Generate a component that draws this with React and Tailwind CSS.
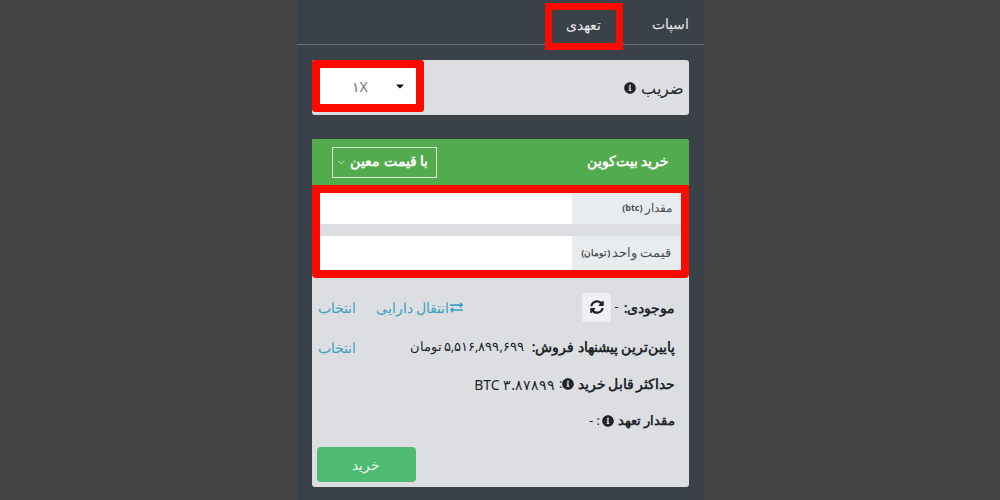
import { FaCaretDown, FaInfoCircle, FaSyncAlt, FaExchangeAlt } from 'react-icons/fa';
import { FiChevronDown } from 'react-icons/fi';

const Info = () => <FaInfoCircle className="text-[12px] text-[#212529] shrink-0" />;

const App = () => {
    return (
        <div dir="rtl" className="w-[1000px] h-[500px] overflow-hidden bg-[#454545] flex justify-center font-['Noto_Sans','Liberation_Sans',sans-serif]">
            <div className="w-[407px] h-full bg-[#3b4148] flex flex-col">
                {/* tabs */}
                <div className="h-[45px] shrink-0 border-b border-[#6b7076] flex items-start pt-[3px] text-[14px] text-[#e9ecef] pr-[15px]">
                    <span className="h-[42px] pb-[2px] flex items-center">اسپات</span>
                    <span className="mr-[29px] w-[78px] h-[47px] pb-[5px] border-[7px] border-[#fb0a00] flex items-center justify-center">تعهدی</span>
                </div>

                <div className="px-[15px] flex flex-col">
                    {/* leverage */}
                    <div className="mt-[15px] h-[55px] rounded-[3px] bg-[#dcdee1] flex items-start justify-between">
                        <div className="h-[55px] flex items-center gap-[5px] pr-[5px] text-[16px] text-[#212529]">
                            <span>ضریب</span>
                            <Info />
                        </div>
                        <div className="w-[112px] h-[52px] rounded-[3px] border-[8px] border-[#fb0a00] bg-white flex items-center justify-between pr-[10px] pl-[32px] text-[14px] text-[#6c757d]">
                            <FaCaretDown className="text-[12px] text-[#111]" />
                            <span>۱X</span>
                        </div>
                    </div>

                    {/* buy card */}
                    <div className="mt-[24px] h-[348px] rounded-[3px] bg-[#dcdee1] flex flex-col overflow-hidden">
                        <div className="h-[46px] shrink-0 bg-[#52ab4d] flex items-center justify-between pr-[19px] pl-[20px] text-white">
                            <span className="text-[14px] font-bold -mt-[3px]">خرید بیت‌کوین</span>
                            <div className="w-[105px] h-[31px] border border-[#dcefdc] flex items-center justify-between pr-[7px] pl-[3px] text-[14px] font-bold">
                                <span className="-mt-[3px]">با قیمت معین</span>
                                <FiChevronDown className="text-[11px] text-[#d5ead5]" />
                            </div>
                        </div>
                        <div className="h-[93px] shrink-0 rounded-b-[4px] border-[8px] border-[#fb0a00] bg-[#dcdee1] flex flex-col justify-between">
                            <div className="h-[31px] bg-white flex">
                                <div className="w-[109px] pb-[2px] bg-[#e9ecef] flex items-center gap-[2px] pr-[9px] text-[12px] text-[#495057]">
                                    مقدار
                                    <span className="text-[9px] font-bold">(btc)</span>
                                </div>
                            </div>
                            <div className="h-[34px] bg-white flex">
                                <div className="w-[109px] bg-[#e9ecef] flex items-center gap-[2px] pr-[9px] text-[12.5px] text-[#495057]">
                                    قیمت واحد
                                    <span className="text-[9px] font-bold">(تومان)</span>
                                </div>
                            </div>
                        </div>

                        <div className="pr-[13px] pl-[5px] flex flex-col text-[13px] text-[#212529]">
                            <div className="mt-[13px] h-[32px] flex items-center justify-between">
                                <div className="flex items-center gap-[5px]">
                                    <span className="text-[14px] font-semibold">موجودی:</span>
                                    <span>-</span>
                                    <span className="-mr-[2px] w-[29px] h-[29px] rounded-[3px] bg-[#eef0f2] flex items-center justify-center">
                                        <FaSyncAlt className="text-[14px] text-[#212529]" />
                                    </span>
                                </div>
                                <div className="ml-[1px] flex items-center gap-[20px] text-[14px] text-[#3aa0c4]">
                                    <span className="flex items-center gap-[1px]">
                                        <FaExchangeAlt className="text-[13px]" />
                                        انتقال دارایی
                                    </span>
                                    <span>انتخاب</span>
                                </div>
                            </div>
                            <div className="mt-[11px] h-[26px] flex items-center justify-between">
                                <div className="flex items-center gap-[8px]">
                                    <span className="text-[13.5px] font-semibold">پایین‌ترین پیشنهاد فروش:</span>
                                    <span className="text-[12.5px] [word-spacing:-2px]">۵,۵۱۶,۸۹۹,۶۹۹ تومان</span>
                                </div>
                                <span className="ml-[1px] text-[14px] text-[#3aa0c4]">انتخاب</span>
                            </div>
                            <div className="mt-[11px] h-[26px] flex items-center gap-[4px]">
                                <span className="text-[13.5px] font-semibold [word-spacing:-1.5px]">حداکثر قابل خرید</span>
                                <Info />
                                <span className="-mr-[4px]">:</span>
                                <span className="text-[14px]">۳.۸۷۸۹۹ BTC</span>
                            </div>
                            <div className="mt-[11px] h-[26px] flex items-center gap-[4px]">
                                <span className="text-[13px] font-semibold">مقدار تعهد</span>
                                <Info />
                                <span className="-mr-[2px]">: -</span>
                            </div>
                            <div className="mt-[13px] w-[99px] h-[35px] self-end rounded-[4px] bg-[#4fbb72] flex items-center justify-center text-[14px] text-[#e8f7ec]">خرید</div>
                        </div>
                    </div>
                </div>
            </div>
        </div>
    );
};

export default App;
